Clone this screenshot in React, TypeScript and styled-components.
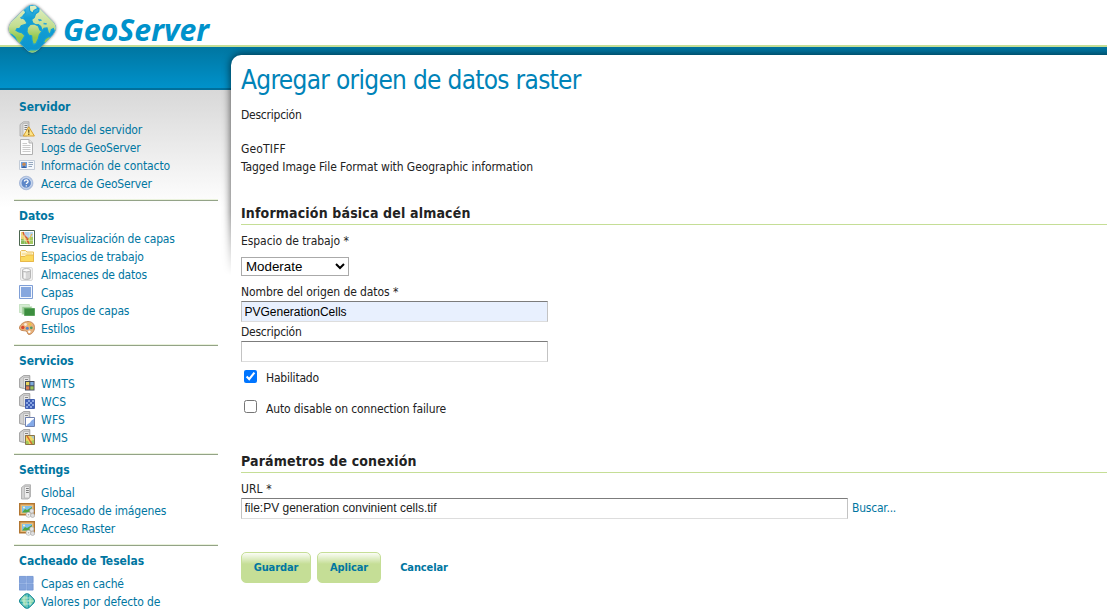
import React from 'react';
import styled, { createGlobalStyle } from 'styled-components';

const GlobalStyle = createGlobalStyle`
  * { box-sizing: border-box; }
  body {
    margin: 0;
    background: #fff;
    color: #222;
    font: 12px/18px 'DejaVu Sans Condensed', 'DejaVu Sans', sans-serif;
    overflow: hidden;
  }
`;

/* ---------- shell ---------- */

const Header = styled.header`
  position: relative;
  height: 47px;
  border-bottom: 2px solid #c5de96;
  background: #fff;
`;

const Logo = styled.svg`
  position: absolute;
  left: 0;
  top: 0;
  z-index: 2;
`;

const Body = styled.div`
  display: grid;
  grid-template-columns: 231px 1fr;
  height: 565px;
  overflow: hidden;
  background:
    linear-gradient(#0076a1, #0092cb) 0 0 / 100% 41px no-repeat,
    linear-gradient(#006f9c, #006f9c) 0 41px / 100% 2px no-repeat,
    linear-gradient(#d8d8d8, #fff) 0 43px / 100% 118px no-repeat,
    #fff;
`;

const Sidebar = styled.nav`
  padding: 45px 13px 0 14px;
`;

const Page = styled.main`
  position: relative;
  margin-top: 8px;
  padding: 9px 0 0 10px;
  border-top-left-radius: 10px;
  background: #fff;
`;

const PageShadow = styled.div`
  position: absolute;
  left: -12px;
  top: -8px;
  right: 0;
  height: 230px;
  overflow: hidden;
  pointer-events: none;
  mask-image: linear-gradient(#000 165px, transparent 228px);

  &::before {
    content: '';
    position: absolute;
    left: 12px;
    top: 8px;
    right: -20px;
    height: 300px;
    border-top-left-radius: 10px;
    box-shadow: 0 0 9px 0 rgba(0, 0, 0, 0.7);
  }
`;

/* ---------- sidebar ---------- */

const Section = styled.section<{ $rows: number }>`
  height: ${(p) => 37 + p.$rows * 18}px;
  padding: 6px 0 0 5px;
  border-bottom: 1px solid #93a387;
  box-shadow: inset 0 -1px 0 #eaf2dc;
`;

const SectionTitle = styled.h3`
  margin: 0 0 5px;
  font-size: 12px;
  line-height: 18px;
  font-weight: bold;
  color: #0076a1;
  letter-spacing: -0.04px;
  white-space: nowrap;
`;

const Item = styled.a<{ $track?: number }>`
  display: flex;
  align-items: center;
  gap: 6px;
  height: 18px;
  color: #0076a1;
  letter-spacing: ${(p) => p.$track ?? -0.16}px;
  white-space: nowrap;

  svg { flex: none; margin: -2px 0 0; }
`;

/* ---------- form ---------- */

const Title = styled.h1`
  margin: 0 0 10px;
  font-size: 26px;
  line-height: 32px;
  font-weight: normal;
  color: #0083b8;
  letter-spacing: -0.7px;
`;

const Line = styled.p<{ $track?: number; $gap?: number }>`
  margin: 0 0 ${(p) => p.$gap ?? 0}px;
  letter-spacing: ${(p) => p.$track ?? 0}px;
`;

const GroupTitle = styled.h2`
  margin: 0 0 7px;
  padding-bottom: 2px;
  border-bottom: 1px solid #c5de96;
  font-size: 14px;
  line-height: 18px;
  font-weight: bold;
  letter-spacing: 0.16px;
`;

const Select = styled.select`
  display: block;
  width: 108px;
  height: 19px;
  margin-bottom: 7px;
  padding: 0;
  border: 1px solid #aaa;
  border-radius: 0;
  background: #fff;
  color: #000;
  font: 13.33px 'Liberation Sans', Arial, sans-serif;
`;

const Input = styled.input<{ $width: number; $filled?: boolean; $gap?: number }>`
  display: block;
  width: ${(p) => p.$width}px;
  height: 21px;
  margin-bottom: ${(p) => p.$gap ?? 0}px;
  padding: ${(p) => (p.$filled ? '2px 3px 1px 2.500px' : '1px 3px 2px 2.500px')};
  border: 1px solid #c3c3c3;
  border-top-color: #7c7c7c;
  border-bottom-color: #ddd;
  background: ${(p) => (p.$filled ? '#e8f0fe' : '#fff')};
  color: ${(p) => (p.$filled ? '#000' : '#222')};
  font: 12px 'Liberation Sans', Arial, sans-serif;
  outline: none;
`;

const Check = styled.label<{ $track?: number; $gap: number; $lift: number }>`
  display: flex;
  align-items: flex-start;
  height: 18px;
  margin-bottom: ${(p) => p.$gap}px;
  letter-spacing: ${(p) => p.$track ?? 0}px;

  input { margin: ${(p) => p.$lift}px 9px 0 3px; width: 13px; height: 13px; }
`;

const Row = styled.div`
  display: flex;
  align-items: center;
  gap: 4px;
  margin-bottom: 33px;
`;

const Link = styled.a`
  padding-bottom: 2px;
  color: #0076a1;
  letter-spacing: -0.22px;
`;

const Actions = styled.div`
  display: flex;
  gap: 6px;
  height: 31px;
`;

const Button = styled.a<{ $width: number; $plain?: boolean }>`
  display: flex;
  align-items: center;
  justify-content: center;
  width: ${(p) => p.$width}px;
  border: 1px solid ${(p) => (p.$plain ? 'transparent' : '#c5de96')};
  border-radius: 5px;
  background: ${(p) => (p.$plain ? 'none' : 'linear-gradient(#fbfdf6 0, #c5de96 11px)')};
  color: #0076a1;
  font-size: 11px;
  font-weight: bold;
  letter-spacing: -0.1px;
  white-space: nowrap;
`;

/* ---------- icons ---------- */

const Icon = ({ children }: { children: React.ReactNode }) => (
  <svg width="16" height="16" viewBox="0 0 16 16">{children}</svg>
);

const ServerShape = () => (
  <>
    <path d="M2.500 3.500 6 .8h5.500v12L9 15H2.500z" fill="#d2d2d2" stroke="#a6a6a6" strokeWidth=".8" />
    <path d="M5.500 2.500h5v11.500h-5z" fill="#ececec" stroke="#b0b0b0" strokeWidth=".7" />
    <path d="M7 4.500h2.800M7 6.500h2.800M7 8.500h2.800" stroke="#7d7d7d" strokeWidth="1" />
  </>
);

const ServiceShape = () => (
  <>
    <path d="M.6 3.600 4.600.6h6.200v13H5.200L.6 12.500z" fill="#d2d2d2" stroke="#8d8d8d" strokeWidth=".8" />
    <path d="M4.600 2.500h5.600v11H4.600z" fill="#e8e8e8" stroke="#adadad" strokeWidth=".7" />
    <path d="M6 4.500h3M6 6.500h3" stroke="#858585" strokeWidth="1" />
  </>
);

const StatusIcon = () => (
  <Icon>
    <g transform="translate(-1.500 0)"><ServerShape /></g>
    <path d="M9.800 5.800 15.400 15H4.300z" fill="#fce489" stroke="#d9a02c" strokeLinejoin="round" />
    <path d="M9.800 8.600v3.200M9.800 12.600v1.300" stroke="#6b4f12" strokeWidth="1.200" />
  </Icon>
);

const LogsIcon = () => (
  <Icon>
    <path d="M1.500.5H10L13.500 4v11.500h-12z" fill="#fdfdfd" stroke="#b0b0b0" />
    <path d="M10 .5V4h3.500" fill="#e4e4e4" stroke="#b0b0b0" />
    <path d="M3.500 4.500H8M3.500 6.500h8M3.500 8.500h8M3.500 10.500h8M3.500 12.500h8" stroke="#cbcbcb" />
  </Icon>
);

const ContactIcon = () => (
  <Icon>
    <path d="M.5 3.500h15v9H.5z" fill="#f5f8fc" stroke="#c3ccd8" />
    <path d="M2 5h6v6H2z" fill="#6fa0dd" />
    <circle cx="5" cy="7.200" r="1.700" fill="#c98750" />
    <path d="M2.800 11c0-2.500 4.400-2.500 4.400 0z" fill="#3b5f9b" />
    <path d="M9.500 5.500H14M9.500 7.500H14M9.500 9.500H13" stroke="#93a6bd" />
  </Icon>
);

const HelpIcon = () => (
  <Icon>
    <circle cx="7.200" cy="8" r="6.800" fill="#b4c6e4" stroke="#90a6cc" strokeWidth=".6" />
    <circle cx="7.200" cy="8" r="5.200" fill="#5d87c8" stroke="#dfe8f6" strokeWidth=".8" />
    <path d="M5.400 6.600c0-2.300 3.700-2.200 3.700 0 0 1.300-1.800 1.300-1.800 2.500M7.300 10.200v1.300" fill="none" stroke="#fff" strokeWidth="1.300" />
  </Icon>
);

const PreviewIcon = () => (
  <Icon>
    <path d="M.5.5h15v15H.5z" fill="#fff" stroke="#4c6650" />
    <path d="M2 2h12v12H2z" fill="#b3d0ea" />
    <path d="M2 2h2l4 6v6H2z" fill="#ead577" />
    <path d="M8 9c2-2 4-2 6-2v7H8z" fill="#a5cb62" />
    <path d="M2 9c3 0 5 2 6 5H2z" fill="#86bb5a" />
    <path d="m4 2 1.500 3.500L8 8l.5 3 2 3" fill="none" stroke="#d6502e" strokeWidth="1.400" />
    <path d="M9 11 13 4" fill="none" stroke="#e8b53d" strokeWidth="1.200" />
    <path d="M5.500 2v12M10.500 2v12M2 6h12M2 10.500h12" stroke="#fff" strokeOpacity=".4" strokeWidth=".7" />
  </Icon>
);

const FolderIcon = () => (
  <Icon>
    <path d="M1.500 13.500v-10l1-1h4l1.500 1.500h6.500v9.500z" fill="#fdf3cf" stroke="#e8bd58" />
    <path d="M1.500 8.500h4.500l1.500-1.500h7v6.500h-13z" fill="#fbd95d" stroke="#e8b84a" />
    <path d="M3 6h10" stroke="#f5d272" />
  </Icon>
);

const StoreIcon = () => (
  <Icon>
    <rect x="1.500" y="1.500" width="12" height="13" rx="1.500" fill="#f3f3f3" stroke="#d2d2d2" strokeWidth=".8" />
    <path d="M3.500 4.200v7.600c0 2.200 8 2.200 8 0V4.200z" fill="#d6d6d6" stroke="#a9a9a9" strokeWidth=".8" />
    <ellipse cx="7.500" cy="4.200" rx="4" ry="1.700" fill="#fafafa" stroke="#a9a9a9" strokeWidth=".8" />
    <path d="M5.800 6.500v6" stroke="#f6f6f6" strokeWidth="1.800" />
  </Icon>
);

const LayerIcon = () => (
  <Icon>
    <path d="M.5 1.500h13v13H.5z" fill="#f2f6fd" stroke="#7f9fd6" />
    <path d="M2 3h10v10H2z" fill="#86a7de" />
  </Icon>
);

const GroupIcon = () => (
  <Icon>
    <path d="M.4 2.500h10v8H.4z" fill="#d5ecd2" stroke="#b4d9b0" strokeWidth=".7" />
    <path d="M2.900 4.500h10v8h-10z" fill="#9aca95" stroke="#d5ecd2" strokeWidth=".7" />
    <path d="M5.500 6.500h10v7h-10z" fill="#3c8e3f" stroke="#5ba35c" />
  </Icon>
);

const StyleIcon = () => (
  <Icon>
    <path d="M9 1.500c4 0 6.500 2.500 6.500 6 0 4-3 7-5.500 7-2 0-1-3-3-3.500S.5 11 .5 8 4.500 1.500 9 1.500z" fill="#e8b27c" stroke="#c0804c" strokeWidth=".9" />
    <circle cx="3.800" cy="7.500" r="1.700" fill="#d9462d" />
    <circle cx="6.500" cy="4.500" r="1.400" fill="#f7ecdd" />
    <circle cx="10.800" cy="4.300" r="1.400" fill="#eec33d" />
    <circle cx="8.300" cy="8.300" r="1.500" fill="#5684c6" />
    <circle cx="12.300" cy="7.800" r="1.400" fill="#4d9c63" />
    <circle cx="10.300" cy="11.800" r="1.300" fill="#fff" />
  </Icon>
);

const WmtsIcon = () => (
  <Icon>
    <ServiceShape />
    <path d="M6 6h9.500v9.500H6z" fill="#444a5c" />
    <path d="M7 7h3.300v3.300H7z" fill="#e8d45c" />
    <path d="M11.300 7h3.300v3.300h-3.300z" fill="#7ca9dc" />
    <path d="M7 11.300h3.300v3.300H7z" fill="#e07d52" />
    <path d="M11.300 11.300h3.300v3.300h-3.300z" fill="#9bc257" />
  </Icon>
);

const WcsIcon = () => (
  <Icon>
    <ServiceShape />
    <path d="M6.500 6.500h9v9h-9z" fill="#8aa6e2" stroke="#4360b0" />
    <path d="M7 7h2v2H7zM11 7h2v2h-2zM9 9h2v2H9zM13 9h2v2h-2zM7 11h2v2H7zM11 11h2v2h-2zM9 13h2v2H9zM13 13h2v2h-2z" fill="#3f5fb6" />
  </Icon>
);

const WfsIcon = () => (
  <Icon>
    <ServiceShape />
    <path d="M6.500 6.500h9v9h-9z" fill="#fff" stroke="#6e80b0" />
    <path d="M15 8v7H7.500c1-3 3-2 4-4s2-2 3.500-3z" fill="#84aae8" />
  </Icon>
);

const WmsIcon = () => (
  <Icon>
    <ServiceShape />
    <path d="M6.500 6.500h9v9h-9z" fill="#f0d862" stroke="#8b7546" />
    <path d="M12 7h3v4z" fill="#a9c6c8" />
    <path d="M7 12c2-1 3 1 3 3H7zM12 12l3-1v4h-3z" fill="#a3c75c" />
    <path d="m8 7 2 3 1 2 2 3" fill="none" stroke="#d86a35" strokeWidth="1.400" />
  </Icon>
);

const GlobalIcon = () => (
  <Icon><ServerShape /></Icon>
);

const ImageIcon = () => (
  <Icon>
    <path d="M.7 1.700h14.600v11H.7z" fill="#e9bb78" stroke="#b27631" strokeWidth="1.400" />
    <path d="M3 4h10v6.500H3z" fill="#7ec0ee" />
    <path d="m3 10.500 3-3.500 2 1 5-3v5.500z" fill="#4fa645" />
    <circle cx="5" cy="5.500" r="1" fill="#fff6bd" />
    <circle cx="12.800" cy="9" r="2.200" fill="#e4e4e4" stroke="#a2a2a2" strokeWidth=".6" />
    <circle cx="9.500" cy="12.800" r="2.500" fill="#f4f4f4" stroke="#aaa" strokeWidth=".6" />
    <circle cx="13.600" cy="13.400" r="2.100" fill="#dedede" stroke="#a2a2a2" strokeWidth=".6" />
    <circle cx="9.500" cy="12.800" r=".8" fill="#aaa" />
  </Icon>
);

const TilesIcon = () => (
  <Icon>
    <path d="M.4 1.400h13.700v13.700H.4z" fill="#7fa4e2" />
    <path d="M.4 1.400h6.400v6.400H.4zM7.700 1.400h6.400v6.400H7.700zM.4 8.700h6.400v6.400H.4zM7.700 8.700h6.400v6.400H7.700z" fill="#84a4dc" stroke="#7092d0" strokeWidth=".7" />
    <path d="M7.250 1.500v13.500M.5 8.250H14" stroke="#b4caf0" strokeWidth=".7" />
  </Icon>
);

const globe = 'M6 1.200Q8 .2 10 1.200L14.800 6Q16.400 8 14.800 10L10 14.800Q8 15.800 6 14.800L1.200 10Q-.4 8 1.200 6Z';

const GridGlobeIcon = () => (
  <Icon>
    <path d={globe} fill="#29a9ad" />
    <path d="M2 6 6 2l2 2-1 4 1 2-1.500 4-3-5zM9 7l4-2 2 3-4 4.500z" fill="#8fd8a4" />
    <path d="M5 2.500v11M8 1v14M11 2.500v11M2.500 5h11M1 8h14M2.500 11h11" stroke="#c9efe0" strokeWidth=".8" />
    <path d={globe} fill="none" stroke="#168a93" />
  </Icon>
);

const gem = 'M79 22Q97 7 115 22L159 65Q176 84 159 104L114 150Q97 167 80 150L34 106Q17 86 34 66Z';

const GeoServerLogo = () => (
  <Logo width="220" height="60" viewBox="0 0 220 60" aria-label="GeoServer">
    <defs>
      <linearGradient id="sea" x1="0" y1="0" x2="0" y2="1">
        <stop offset="0" stopColor="#5cc0e4" />
        <stop offset=".3" stopColor="#14a0d6" />
        <stop offset="1" stopColor="#0a92cc" />
      </linearGradient>
      <linearGradient id="land" gradientUnits="userSpaceOnUse" x1="0" y1="15" x2="0" y2="155">
        <stop offset="0" stopColor="#e3f0c4" />
        <stop offset=".45" stopColor="#c3de92" />
        <stop offset=".7" stopColor="#93c84c" />
        <stop offset="1" stopColor="#86c66a" />
      </linearGradient>
      <clipPath id="gem"><path d={gem} /></clipPath>
      <filter id="soft" x="-20%" y="-20%" width="140%" height="140%">
        <feGaussianBlur stdDeviation="4" />
      </filter>
    </defs>
    <g transform="scale(.33333)">
      <path d={gem} fill="#333" opacity=".75" filter="url(#soft)" />
      <g clipPath="url(#gem)">
        <path d="M0 0h200v180H0z" fill="url(#sea)" />
        <g fill="url(#land)" stroke="#14a0d6" strokeWidth="3.500">
          <path d="M46 52 66 30l8 0 3 9-7 7-5 8 9 4 8 12-8 4-10 3-5 8-8 1-3 5 7 4 12 4 8 8-7 12-8 12-6-1-9-18-9-8-14-6V70z" />
          <path d="M88 17l18-2 8 10-12 6-4 9-9-8z" />
          <path d="M98 68l-3-9 8-7 4-11 9-6 2-14 10 10 38 38 4 14-5 14-5-11-6 3-3 13-6-4-4-14-9 1-5 8-5-14-7-5-9 1-5-4z" />
          <path d="M82 84l9-11 12-1 12 6 5 12 6 3-8 11-3 12-7 15-8 3-4-13-1-13-9-3-5-9z" />
          <path d="M136 116l9-6 10 2-3 8-14 12-7-6z" />
          <path d="M78 155l14-6 14 1 14-4-10 18H84z" />
        </g>
        <path d="M60 52l9-4 3 5-8 5zM114 57l9 1 3 4-9 2zM131 68l10 2-2 4-9-1z" fill="#2ba8d8" />
      </g>
      <path d={gem} fill="none" stroke="#fff" strokeOpacity=".3" strokeWidth="3" clipPath="url(#gem)" />
    </g>
    <text x="63" y="41" textLength="146" lengthAdjust="spacingAndGlyphs" fill="#0092cb" fontFamily="'Noto Sans', 'Open Sans', sans-serif" fontSize="31" fontWeight="bold" fontStyle="italic">GeoServer</text>
  </Logo>
);

/* ---------- data ---------- */

type Entry = { label: string; icon: React.ComponentType; track?: number };

const sections: { title: string; items: Entry[] }[] = [
  {
    title: 'Servidor',
    items: [
      { label: 'Estado del servidor', icon: StatusIcon },
      { label: 'Logs de GeoServer', icon: LogsIcon },
      { label: 'Información de contacto', icon: ContactIcon, track: -0.11 },
      { label: 'Acerca de GeoServer', icon: HelpIcon },
    ],
  },
  {
    title: 'Datos',
    items: [
      { label: 'Previsualización de capas', icon: PreviewIcon, track: -0.18 },
      { label: 'Espacios de trabajo', icon: FolderIcon },
      { label: 'Almacenes de datos', icon: StoreIcon, track: -0.2 },
      { label: 'Capas', icon: LayerIcon, track: -0.2 },
      { label: 'Grupos de capas', icon: GroupIcon },
      { label: 'Estilos', icon: StyleIcon },
    ],
  },
  {
    title: 'Servicios',
    items: [
      { label: 'WMTS', icon: WmtsIcon, track: 0.1 },
      { label: 'WCS', icon: WcsIcon, track: 0 },
      { label: 'WFS', icon: WfsIcon, track: 0.2 },
      { label: 'WMS', icon: WmsIcon, track: 0 },
    ],
  },
  {
    title: 'Settings',
    items: [
      { label: 'Global', icon: GlobalIcon },
      { label: 'Procesado de imágenes', icon: ImageIcon },
      { label: 'Acceso Raster', icon: ImageIcon },
    ],
  },
  {
    title: 'Cacheado de Teselas',
    items: [
      { label: 'Capas en caché', icon: TilesIcon, track: -0.2 },
      { label: 'Valores por defecto de', icon: GridGlobeIcon, track: -0.1 },
    ],
  },
];

export default function App() {
  return (
    <>
      <GlobalStyle />
      <Header><GeoServerLogo /></Header>
      <Body>
        <Sidebar>
          {sections.map((s) => (
            <Section key={s.title} $rows={s.items.length}>
              <SectionTitle>{s.title}</SectionTitle>
              {s.items.map(({ label, icon: Glyph, track }) => (
                <Item key={label} $track={track}><Glyph />{label}</Item>
              ))}
            </Section>
          ))}
        </Sidebar>
        <Page>
          <PageShadow />
          <Title>Agregar origen de datos raster</Title>
          <Line $gap={16} $track={-0.24}>Descripción</Line>
          <Line $track={0.15}>GeoTIFF</Line>
          <Line $gap={28} $track={-0.08}>Tagged Image File Format with Geographic information</Line>

          <GroupTitle>Información básica del almacén</GroupTitle>
          <Line $gap={7} $track={-0.06}>Espacio de trabajo *</Line>
          <Select defaultValue="Moderate"><option>Moderate</option></Select>
          <Line $track={-0.09}>Nombre del origen de datos *</Line>
          <Input $width={307} $filled $gap={1} defaultValue="PVGenerationCells" />
          <Line $track={-0.24}>Descripción</Line>
          <Input $width={307} $gap={7} />
          <Check $gap={13} $lift={1} $track={-0.2}><input type="checkbox" defaultChecked />Habilitado</Check>
          <Check $gap={34} $lift={0} $track={-0.13}><input type="checkbox" />Auto disable on connection failure</Check>

          <GroupTitle>Parámetros de conexión</GroupTitle>
          <Line $track={0.1}>URL *</Line>
          <Row>
            <Input $width={607} defaultValue="file:PV generation convinient cells.tif" />
            <Link>Buscar...</Link>
          </Row>
          <Actions>
            <Button $width={70}>Guardar</Button>
            <Button $width={64}>Aplicar</Button>
            <Button $width={74} $plain>Cancelar</Button>
          </Actions>
        </Page>
      </Body>
    </>
  );
}
